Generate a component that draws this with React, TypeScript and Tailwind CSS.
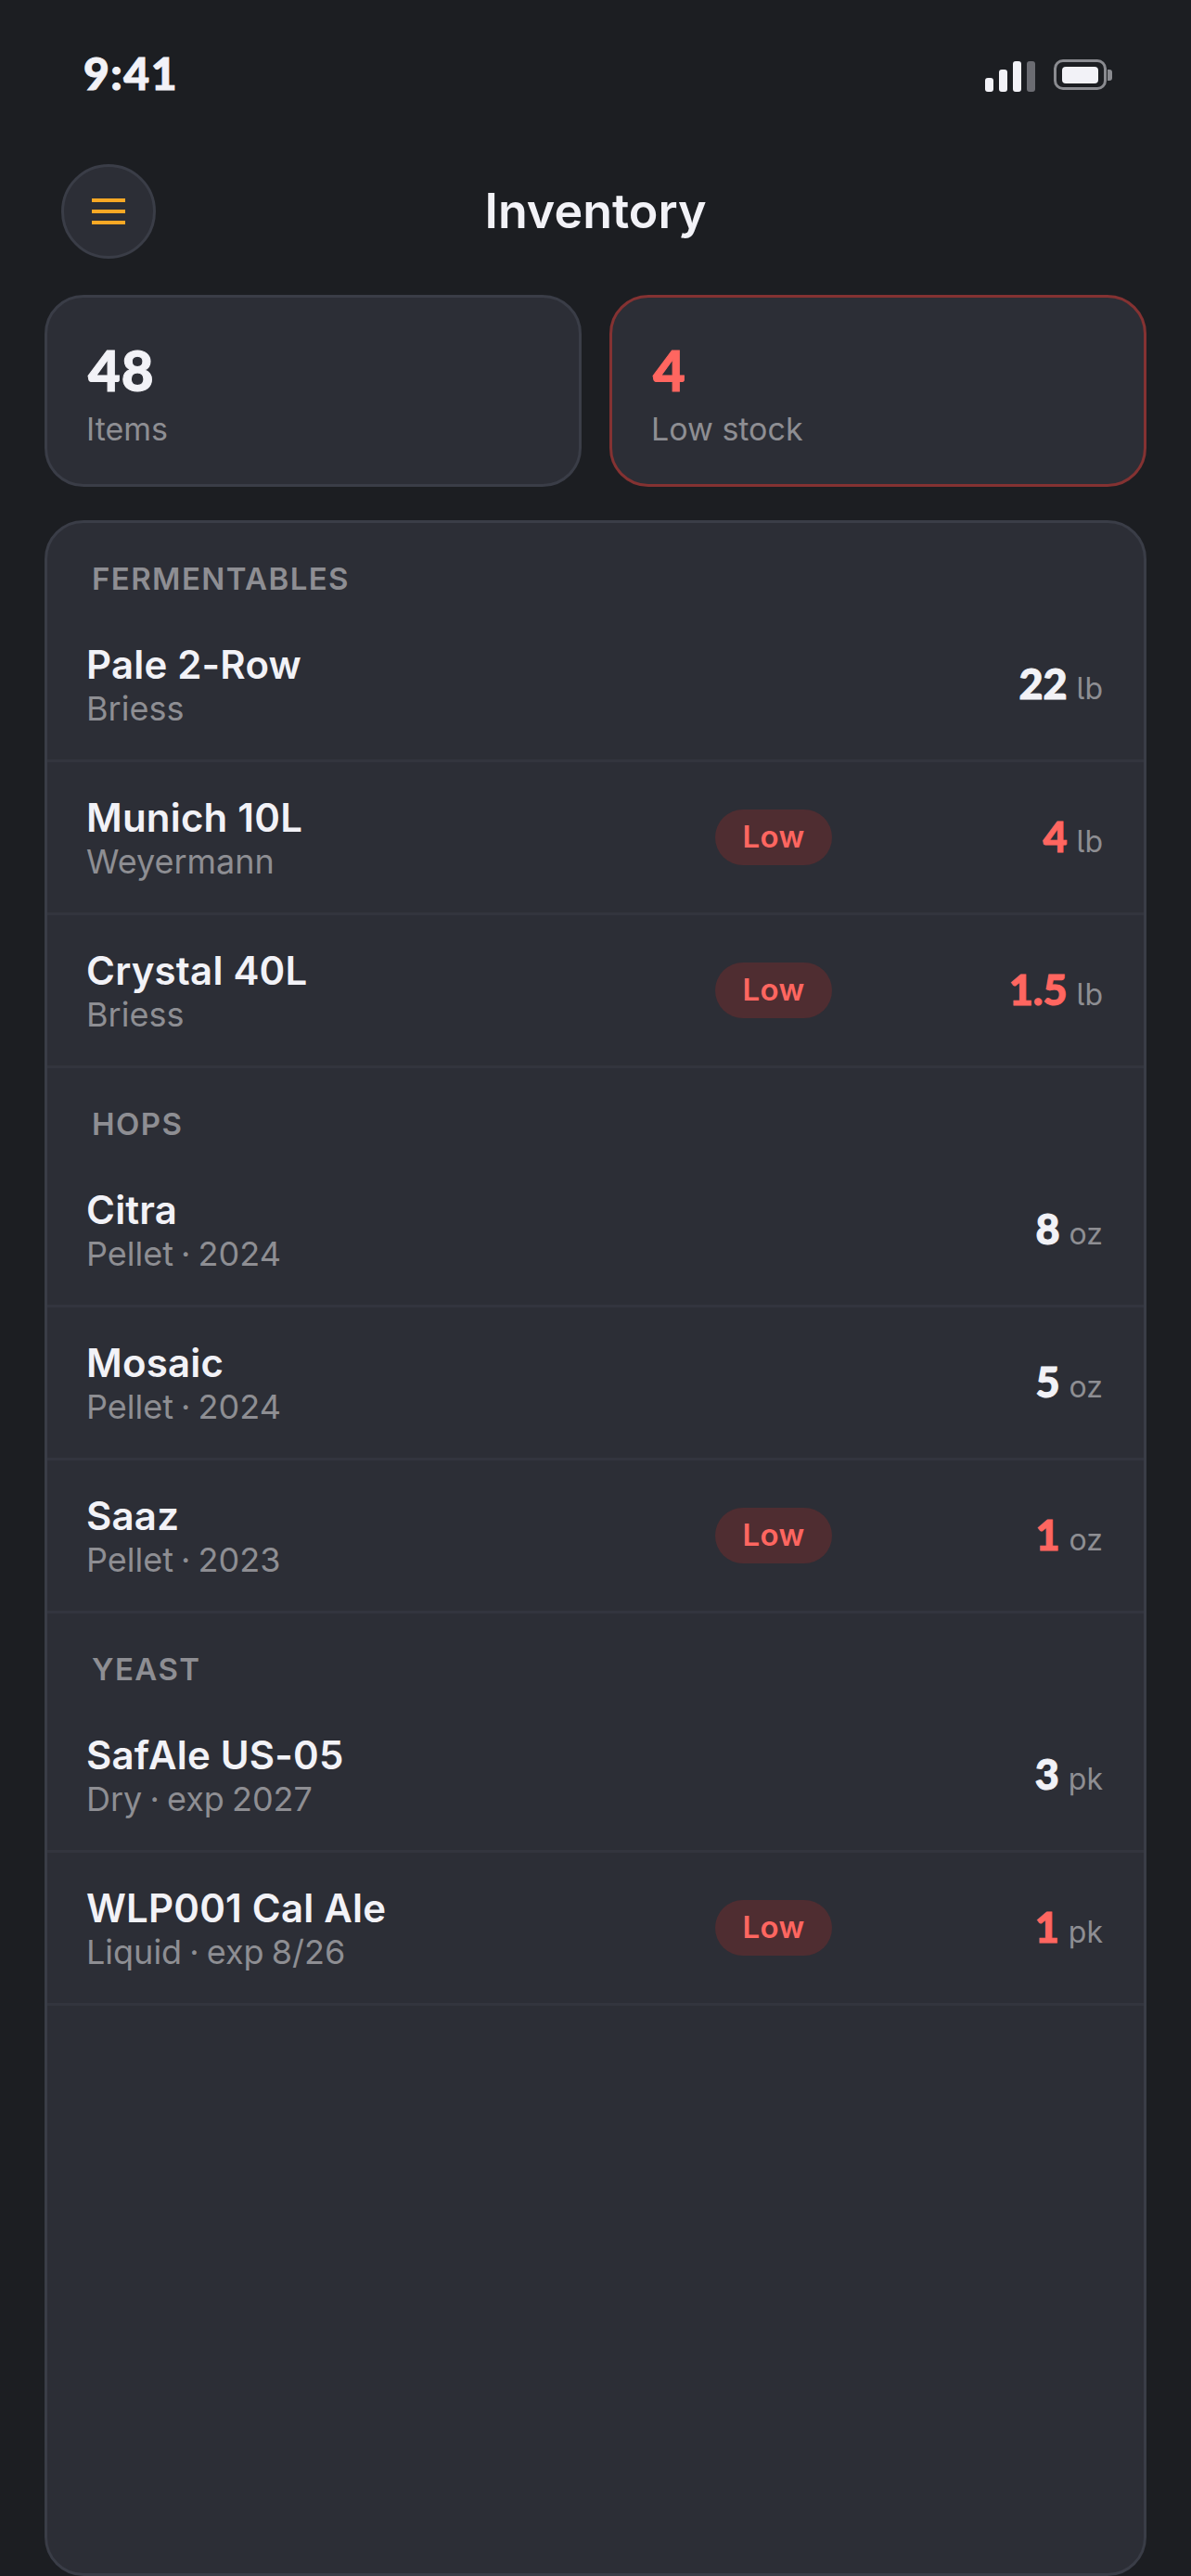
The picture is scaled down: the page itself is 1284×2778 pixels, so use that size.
type Item = { name: string; sub: string; qty: string; unit: string; low?: boolean };

const sections: { title: string; items: Item[] }[] = [
  {
    title: "FERMENTABLES",
    items: [
      { name: "Pale 2-Row", sub: "Briess", qty: "22", unit: "lb" },
      { name: "Munich 10L", sub: "Weyermann", qty: "4", unit: "lb", low: true },
      { name: "Crystal 40L", sub: "Briess", qty: "1.5", unit: "lb", low: true },
    ],
  },
  {
    title: "HOPS",
    items: [
      { name: "Citra", sub: "Pellet · 2024", qty: "8", unit: "oz" },
      { name: "Mosaic", sub: "Pellet · 2024", qty: "5", unit: "oz" },
      { name: "Saaz", sub: "Pellet · 2023", qty: "1", unit: "oz", low: true },
    ],
  },
  {
    title: "YEAST",
    items: [
      { name: "SafAle US-05", sub: "Dry · exp 2027", qty: "3", unit: "pk" },
      { name: "WLP001 Cal Ale", sub: "Liquid · exp 8/26", qty: "1", unit: "pk", low: true },
    ],
  },
];

function Row({ item }: { item: Item }) {
  return (
    <div className="grid h-[165px] grid-cols-[1fr_126px_292px] items-center border-b-[3px] border-[#33353e] pl-[42px] pr-[44px]">
      <div className="pt-[2px]">
        <div className="text-[42px] leading-[50px] font-semibold tracking-[0.2px] text-[#f2f2f7]">{item.name}</div>
        <div className="text-[36px] leading-[44px] text-[#8e8e93] [word-spacing:-2px]">{item.sub}</div>
      </div>
      {item.low ? (
        <span className="flex h-[60px] items-center justify-center rounded-full bg-[#4f2d31] pb-[1px] text-[33px] font-semibold tracking-[0.4px] text-[#ff6660]">
          Low
        </span>
      ) : (
        <span />
      )}
      <div className="flex items-baseline justify-end gap-[10px]">
        <span className={`font-['Lato',sans-serif] text-[45px] font-black [-webkit-text-stroke:1px_currentColor] ${item.low ? "text-[#ff6660]" : "text-[#f2f2f7]"}`}>{item.qty}</span>
        <span className="text-[32px] text-[#8e8e93] [font-feature-settings:'cv05']">{item.unit}</span>
      </div>
    </div>
  );
}

export default function App() {
  return (
    <div className="flex h-[2778px] w-[1284px] flex-col overflow-hidden bg-[#1c1e22] font-['Inter',sans-serif]">
      <div className="flex h-[177px] shrink-0 items-start justify-between pl-[90px] pr-[85px] pt-[50px]">
        <span className="font-['Lato',sans-serif] text-[48px] leading-[58px] font-black tracking-[1.5px] text-[#f2f2f7] [-webkit-text-stroke:1px_currentColor]">9:41</span>
        <div className="flex items-start gap-[20px] pt-[14px]">
          <div className="mt-[2px] flex h-[33px] items-end gap-[6px]">
            <span className="h-[15px] w-[9px] rounded-[3px] bg-[#f2f2f7]" />
            <span className="h-[24px] w-[9px] rounded-[3px] bg-[#f2f2f7]" />
            <span className="h-[33px] w-[9px] rounded-[3px] bg-[#f2f2f7]" />
            <span className="h-[33px] w-[9px] rounded-[3px] bg-[#6b6c72]" />
          </div>
          <div className="flex items-center gap-[1px]">
            <div className="flex h-[33px] w-[57px] items-center justify-center rounded-[10px] border-[3px] border-[#8a8b90]">
              <span className="h-[18px] w-[39px] rounded-[4px] bg-[#f2f2f7]" />
            </div>
            <span className="h-[12px] w-[5px] rounded-r-[3px] bg-[#8a8b90]" />
          </div>
        </div>
      </div>

      <div className="relative flex h-[102px] shrink-0 items-center justify-center">
        <button className="absolute left-[66px] top-0 flex h-[102px] w-[102px] items-center justify-center rounded-full border-[3px] border-[#3a3d47] bg-[#2c2e36]">
          <svg width="36" height="28" viewBox="0 0 36 28" fill="#f9a825">
            <rect y="0" width="36" height="4" />
            <rect y="12" width="36" height="4" />
            <rect y="24" width="36" height="4" />
          </svg>
        </button>
        <h1 className="text-[52px] font-semibold text-[#f2f2f7]">Inventory</h1>
      </div>

      <div className="mt-[39px] flex shrink-0 gap-[30px] px-[48px]">
        <div className="h-[207px] flex-1 rounded-[42px] border-[3px] border-[#3a3d47] bg-[#2c2e36] pl-[42px] pt-[44px]">
          <div className="ml-[2px] font-['Lato',sans-serif] text-[60px] leading-[68px] font-black tracking-[1px] text-[#f2f2f7] [-webkit-text-stroke:1px_currentColor]">48</div>
          <div className="mt-[9px] text-[34px] leading-[42px] text-[#8e8e93]">Items</div>
        </div>
        <div className="h-[207px] flex-1 rounded-[42px] border-[3px] border-[#843232] bg-[#2c2e36] pl-[42px] pt-[44px]">
          <div className="ml-[2px] font-['Lato',sans-serif] text-[60px] leading-[68px] font-black tracking-[1px] text-[#ff6660] [-webkit-text-stroke:1px_currentColor]">4</div>
          <div className="mt-[9px] text-[34px] leading-[42px] text-[#8e8e93]">Low stock</div>
        </div>
      </div>

      <div className="mx-[48px] mt-[36px] min-h-0 flex-1 rounded-[42px] border-[3px] border-[#3a3d47] bg-[#2c2e36]">
        {sections.map((s) => (
          <div key={s.title}>
            <div className="h-[93px] pl-[48px] pt-[40px] text-[33px] leading-[40px] font-semibold tracking-[1.4px] text-[#8e8e93]">{s.title}</div>
            {s.items.map((item) => (
              <Row key={item.name} item={item} />
            ))}
          </div>
        ))}
      </div>
    </div>
  );
}
